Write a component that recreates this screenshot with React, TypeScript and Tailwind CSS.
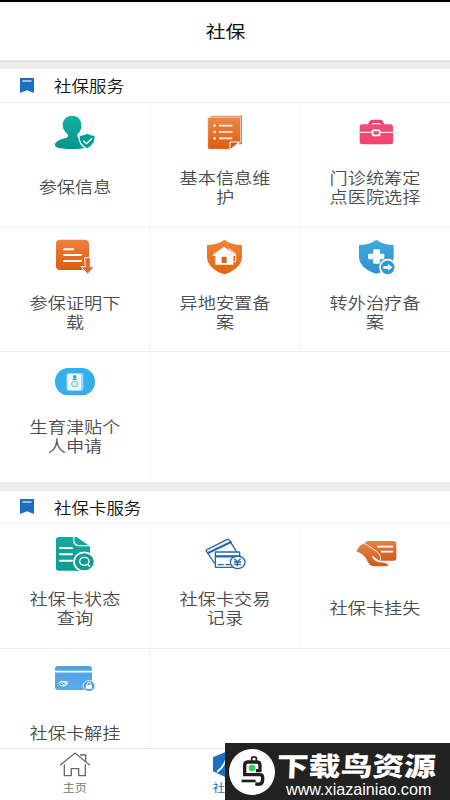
import React from "react";

const grad = (id: string, from: string, to: string) => (
  <defs>
    <linearGradient id={id} x1="0" y1="0" x2="0" y2="1">
      <stop offset="0" stopColor={from} />
      <stop offset="1" stopColor={to} />
    </linearGradient>
  </defs>
);

const Icon = ({ box, children }: { box: string; children: React.ReactNode }) => (
  <svg viewBox={box} className="block h-12 w-12 shrink-0" fill="none" strokeLinecap="round" strokeLinejoin="round">
    {children}
  </svg>
);

const UserShield = () => (
  <Icon box="153 27 144 144">
    {grad("us", "#0fb0a6", "#0b9389")}
    <path fill="url(#us)" d="M216 47c17 0 28 12 28 29 0 11-4 20-11 27-3 5-1 10 6 12 12 4 24 9 24 20 0 9-14 12-46 12s-52-2-52-12c0-12 17-17 33-21 7-3 8-7 4-12-8-7-14-15-14-26 0-17 12-29 28-29z" />
    <path fill="#0b9c92" stroke="#fff" strokeWidth="4" d="M262 99c7 5 14 7 24 7 1 20-6 33-24 41-19-8-26-21-25-41 10 0 18-2 25-7z" />
    <path stroke="#fff" strokeWidth="4" d="M251 123l8 8 16-15" />
  </Icon>
);

const ListPages = () => (
  <Icon box="153 27 144 144">
    {grad("lp", "#ee8746", "#dc5c12")}
    <rect x="182" y="47" width="94" height="86" rx="3" fill="#dc7435" />
    <path fill="url(#lp)" stroke="#fff" strokeWidth="2" d="M177 51h92q3 0 3 3v72l-28 22h-67q-4 0-4-4V55q0-4 4-4z" />
    <path fill="#cb5713" stroke="#fff" strokeWidth="3" d="M240 148v-22h27z" />
    <path stroke="#fff4e8" strokeWidth="5" strokeLinecap="butt" d="M207 77h40M207 96h40M207 115h40" />
    <path stroke="#fff4e8" strokeWidth="8" d="M194 77h.1M194 96h.1M194 115h.1" />
  </Icon>
);

const Briefcase = () => (
  <Icon box="153 27 144 144">
    {grad("bc", "#ef4f7b", "#f5426f")}
    <path fill="#e8466f" d="M201 75c2-10 6-16 15-16h20c9 0 12 6 14 16h-9c-1-4-4-6-7-6h-16c-4 0-6 2-7 6z" />
    <path fill="url(#bc)" d="M184 73h84q8 0 8 8v45q0 7-7 7h-86q-7 0-7-7V81q0-8 8-8z" />
    <path stroke="#fff" strokeWidth="3" strokeLinecap="butt" d="M175 97h102" />
    <rect x="215" y="91" width="21" height="15" rx="2" fill="#ef4776" stroke="#fff" strokeWidth="5" />
  </Icon>
);

const DocDownload = () => (
  <Icon box="153 27 144 144">
    {grad("dd", "#ee8240", "#df5a10")}
    <rect x="168" y="44" width="99" height="91" rx="12" fill="url(#dd)" />
    <path stroke="#fff" strokeWidth="6" d="M192 73h28M192 90h51M192 108h51" />
    <path fill="#e26b22" stroke="#fff" strokeWidth="3" d="M255 98h16v27h12l-20 23-20-23h12z" />
  </Icon>
);

const HomeShield = () => (
  <Icon box="153 27 144 144">
    {grad("hs", "#ee833c", "#e2660d")}
    <path fill="url(#hs)" d="M223 44c15 11 33 16 53 16v35c0 23-20 42-53 53-33-11-52-30-52-53V60c20 0 38-5 52-16z" />
    <path fill="#fff" d="M222 65l35 24-3 4h-4v26h-54V93h-6l-2-4z" />
    <path fill="#d96618" d="M215 114V99q0-4 4-4h7q4 0 4 4v15z" />
    <path stroke="#fff" strokeWidth="3" d="M237 71l21 16M257 91v19h-5" />
  </Icon>
);

const MedicalShield = () => (
  <Icon box="603 27 144 144">
    {grad("ms", "#42a9dc", "#2c93cf")}
    <path fill="url(#ms)" d="M676 44c15 11 32 16 52 16v35c0 23-20 41-52 51-32-10-52-28-52-51V60c20 0 37-5 52-16z" />
    <path fill="#fff" d="M670 73h13q4 0 4 4v9h9q4 0 4 4v9q0 4-4 4h-9v9q0 4-4 4h-13q-4 0-4-4v-9h-11q-4 0-4-4v-9q0-4 4-4h11v-9q0-4 4-4z" />
    <circle cx="710" cy="127" r="23" fill="#3299d0" stroke="#fff" strokeWidth="5" />
    <path fill="#fff" d="M697 123h14v-6l13 10-13 10v-6h-14z" />
  </Icon>
);

const MaternityBadge = () => (
  <Icon box="153 24 144 144">
    <rect x="165" y="54" width="120" height="82" rx="40" fill="#36aeeb" />
    <rect x="199" y="69" width="51" height="54" rx="7" fill="#91dcf8" />
    <rect x="203" y="72" width="40" height="48" rx="5" fill="#eefaff" />
    <circle cx="224" cy="80" r="5" fill="#459aaf" />
    <path fill="#459aaf" d="M217 90q0-5 7-5t7 5z" />
    <circle cx="224" cy="102" r="9" fill="#d8f1fa" stroke="#72bcd6" strokeWidth="3" />
  </Icon>
);

const DocSearch = () => (
  <Icon box="153 15 144 144">
    {grad("ds", "#12a99e", "#0a9e91")}
    <path fill="url(#ds)" d="M176 36h54l40 28v71q0 2-3 2h-91q-8 0-8-8V44q0-8 8-8z" />
    <path stroke="#fff" strokeWidth="4" d="M221 36v8q0 18 18 18h31" />
    <path stroke="#fff" strokeWidth="6" d="M180 69h36M180 88h36M180 107h36" />
    <ellipse cx="253" cy="110" rx="31" ry="28" fill="#0b9d93" stroke="#fff" strokeWidth="5" />
    <ellipse cx="253" cy="109" rx="14" ry="12" stroke="#fff" strokeWidth="4" />
    <path stroke="#fff" strokeWidth="4" d="M263 118l6 6" />
  </Icon>
);

const CardsYen = () => (
  <Icon box="153 15 144 144">
    <g stroke="#246aac" strokeWidth="4">
      <path d="M193 114l-25-37q0-2 3-3l61-31 5 1 22 35" />
      <path strokeWidth="6" d="M174 84l69-33" />
      <rect x="196" y="81" width="73" height="46" rx="2" fill="#fff" />
      <path strokeWidth="7" strokeLinecap="butt" d="M196 94h74" />
      <path strokeWidth="4" strokeLinecap="butt" d="M203 119h18M226 119h15" />
      <ellipse cx="263" cy="112" rx="22" ry="19" fill="#fff" />
      <path strokeWidth="4" d="M254 102l8 8 9-8M262 110v12M253 111h19M253 118h19" />
    </g>
  </Icon>
);

const HandCard = () => (
  <Icon box="153 15 144 144">
    {grad("hc", "#e5824a", "#cd5a1a")}
    <path fill="url(#hc)" d="M190 56q4-8 12-8h76q8 0 8 8v43q0 8-8 8h-44z" />
    <path stroke="#fff" strokeWidth="5" strokeLinecap="butt" d="M229 65h47M240 80h36" />
    <path fill="url(#hc)" stroke="#fff" strokeWidth="2.5" d="M184 56c6-1 11 1 16 5l28 19c7 5 12 13 11 27q-4 3-9-2l-16-11c2 7 8 13 16 15 8 3 15 1 22 4 5 2 9 3 13 10-16 3-40 3-52 1-11-3-14-15-20-25-6-9-16-15-28-19 4-12 10-18 19-24z" />
  </Icon>
);

const CardLock = () => (
  <Icon box="153 30 144 144">
    {grad("cl", "#4aa4e5", "#5ca9ec")}
    <rect x="165" y="63" width="111" height="72" rx="9" fill="url(#cl)" />
    <path stroke="#fff" strokeWidth="5" strokeLinecap="butt" d="M165 80h112" />
    <ellipse cx="189" cy="116" rx="12" ry="7" stroke="#fff" strokeWidth="3" />
    <path stroke="#fff" strokeWidth="3" d="M186 112q0 8 8 9M192 112l8 6M196 111h7" />
    <ellipse cx="267" cy="123" rx="18" ry="16" fill="#4d9bd7" stroke="#e6f5ff" strokeWidth="3" />
    <path stroke="#fff" strokeWidth="3" d="M261 120v-4q6-8 12 0v4" />
    <rect x="257" y="120" width="19" height="12" rx="2" fill="#fff" />
  </Icon>
);

type Item = { icon: React.ReactNode; lines: string[] };

const Cell = ({ item, col }: { item?: Item; col: number }) => (
  <div
    className={
      "flex flex-col items-center pt-1.5 " +
      (col === 0 ? "border-r border-[#f3f3f3] pl-px" : col === 2 && item ? "border-l border-[#f3f3f3]" : "")
    }
  >
    {item && (
      <>
        {item.icon}
        <div className="flex h-[59px] origin-center scale-x-[1.135] flex-col items-center justify-center text-[16px] leading-[18.6px] font-[350] whitespace-nowrap text-[#4c4c4c]">
          {item.lines.map((l) => (
            <span key={l}>{l}</span>
          ))}
        </div>
      </>
    )}
  </div>
);

const Row = ({ items, className }: { items: Item[]; className: string }) => (
  <div className={"grid shrink-0 grid-cols-3 border-t border-[#f0f0f0] " + className}>
    {[0, 1, 2].map((c) => (
      <Cell key={c} item={items[c]} col={c} />
    ))}
  </div>
);

const SectionTitle = ({ text, className }: { text: string; className: string }) => (
  <div className={"flex shrink-0 items-center pb-px pl-5 " + className}>
    <svg viewBox="0 0 42 45" className="h-[15px] w-3.5" fill="none">
      <path fill="#1b70bd" d="M0 0h42v45l-21-8-21 8z" />
      <path stroke="#d5e8f7" strokeWidth="4" d="M7 9h28" />
    </svg>
    <span className="ml-5 origin-left scale-x-[1.135] text-[15.4px] leading-5 font-[350] text-[#111]">{text}</span>
  </div>
);

const rows1: Item[][] = [
  [
    { icon: <UserShield />, lines: ["参保信息"] },
    { icon: <ListPages />, lines: ["基本信息维", "护"] },
    { icon: <Briefcase />, lines: ["门诊统筹定", "点医院选择"] },
  ],
  [
    { icon: <DocDownload />, lines: ["参保证明下", "载"] },
    { icon: <HomeShield />, lines: ["异地安置备", "案"] },
    { icon: <MedicalShield />, lines: ["转外治疗备", "案"] },
  ],
  [{ icon: <MaternityBadge />, lines: ["生育津贴个", "人申请"] }],
];

const rows2: Item[][] = [
  [
    { icon: <DocSearch />, lines: ["社保卡状态", "查询"] },
    { icon: <CardsYen />, lines: ["社保卡交易", "记录"] },
    { icon: <HandCard />, lines: ["社保卡挂失"] },
  ],
  [{ icon: <CardLock />, lines: ["社保卡解挂"] }],
];

const TabBar = () => (
  <nav className="grid h-[52px] shrink-0 grid-cols-3 border-t border-[#e6e6e6] bg-white">
    <div className="flex flex-col items-center pt-[3px]">
      <svg viewBox="177 321 96 75" className="h-[25px] w-8" fill="none" stroke="#686868" strokeWidth="4">
        <path d="M180 361l45-37 45 37M193 358v34h21v-21h22v21h20v-34M240 330h17v19" />
      </svg>
      <span className="mt-0.5 scale-x-[1.12] text-[10.8px] leading-4 text-[#777]">主页</span>
    </div>
    <div className="flex flex-col items-center pt-[3px]">
      <svg viewBox="0 0 75 75" className="h-[25px] w-[25px]" fill="none">
        <path fill="#1b70c2" d="M37 0l37 16v42L37 75 0 58V16z" />
        <path stroke="#fff" strokeWidth="5" d="M12 60q22-16 28-42 5 28 24 42" />
      </svg>
      <span className="mt-0.5 scale-x-[1.12] text-[10.8px] leading-4 text-[#1b70c2]">社保</span>
    </div>
    <div />
  </nav>
);

const Watermark = () => (
  <div className="absolute right-0 bottom-0 flex h-[57px] w-[225px] overflow-hidden bg-[#222]">
    <svg viewBox="84 38 144 144" className="mt-[5px] ml-[3px] h-12 w-12 shrink-0" fill="none">
      <circle cx="156" cy="110" r="69" fill="#fff" />
      <g stroke="#202020" strokeLinejoin="round">
        <path strokeWidth="5" d="M155 76V67q7-5 14 0v9" />
        <path strokeWidth="10" d="M134 119V90q0-10 10-10h26q10 0 10 10v16h-12M129 118h50q9 0 9 8v8q-1 13-14 13l-8-2" />
        <path strokeWidth="8" d="M125 137h42" />
      </g>
      <circle cx="156" cy="98" r="10" fill="#29d361" />
    </svg>
    <div className="flex flex-col text-white">
      <span className="mt-[6px] ml-px origin-left scale-x-[1.2] -skew-x-2 text-[26.5px] leading-[32px] font-black whitespace-nowrap">
        下载鸟资源
      </span>
      <span className="ml-[10px] origin-left scale-x-[0.985] font-['Liberation_Sans',sans-serif] text-[16.4px] leading-[16px] whitespace-nowrap">
        www.xiazainiao.com
      </span>
    </div>
  </div>
);

export default function App() {
  return (
    <div className="relative flex h-[800px] w-[450px] flex-col overflow-hidden bg-white font-['Noto_Sans_CJK_SC',sans-serif]">
      <header className="flex h-[61px] shrink-0 items-center justify-center border-t-2 border-b border-t-black border-b-[#e2e2e2]">
        <h1 className="scale-x-[1.135] text-[17.5px] leading-6 text-[#111]">社保</h1>
      </header>
      <div className="h-2 shrink-0 bg-gradient-to-b from-[#dedede] via-[#ececec] via-20% to-[#ececec]" />
      <SectionTitle text="社保服务" className="h-[33px]" />
      <Row items={rows1[0]} className="h-[125px]" />
      <Row items={rows1[1]} className="h-[124px]" />
      <Row items={rows1[2]} className="h-[131px]" />
      <div className="h-[9px] shrink-0 bg-[#ececec]" />
      <SectionTitle text="社保卡服务" className="h-8" />
      <Row items={rows2[0]} className="h-[125px]" />
      <Row items={rows2[1]} className="h-[100px]" />
      <TabBar />
      <Watermark />
    </div>
  );
}
